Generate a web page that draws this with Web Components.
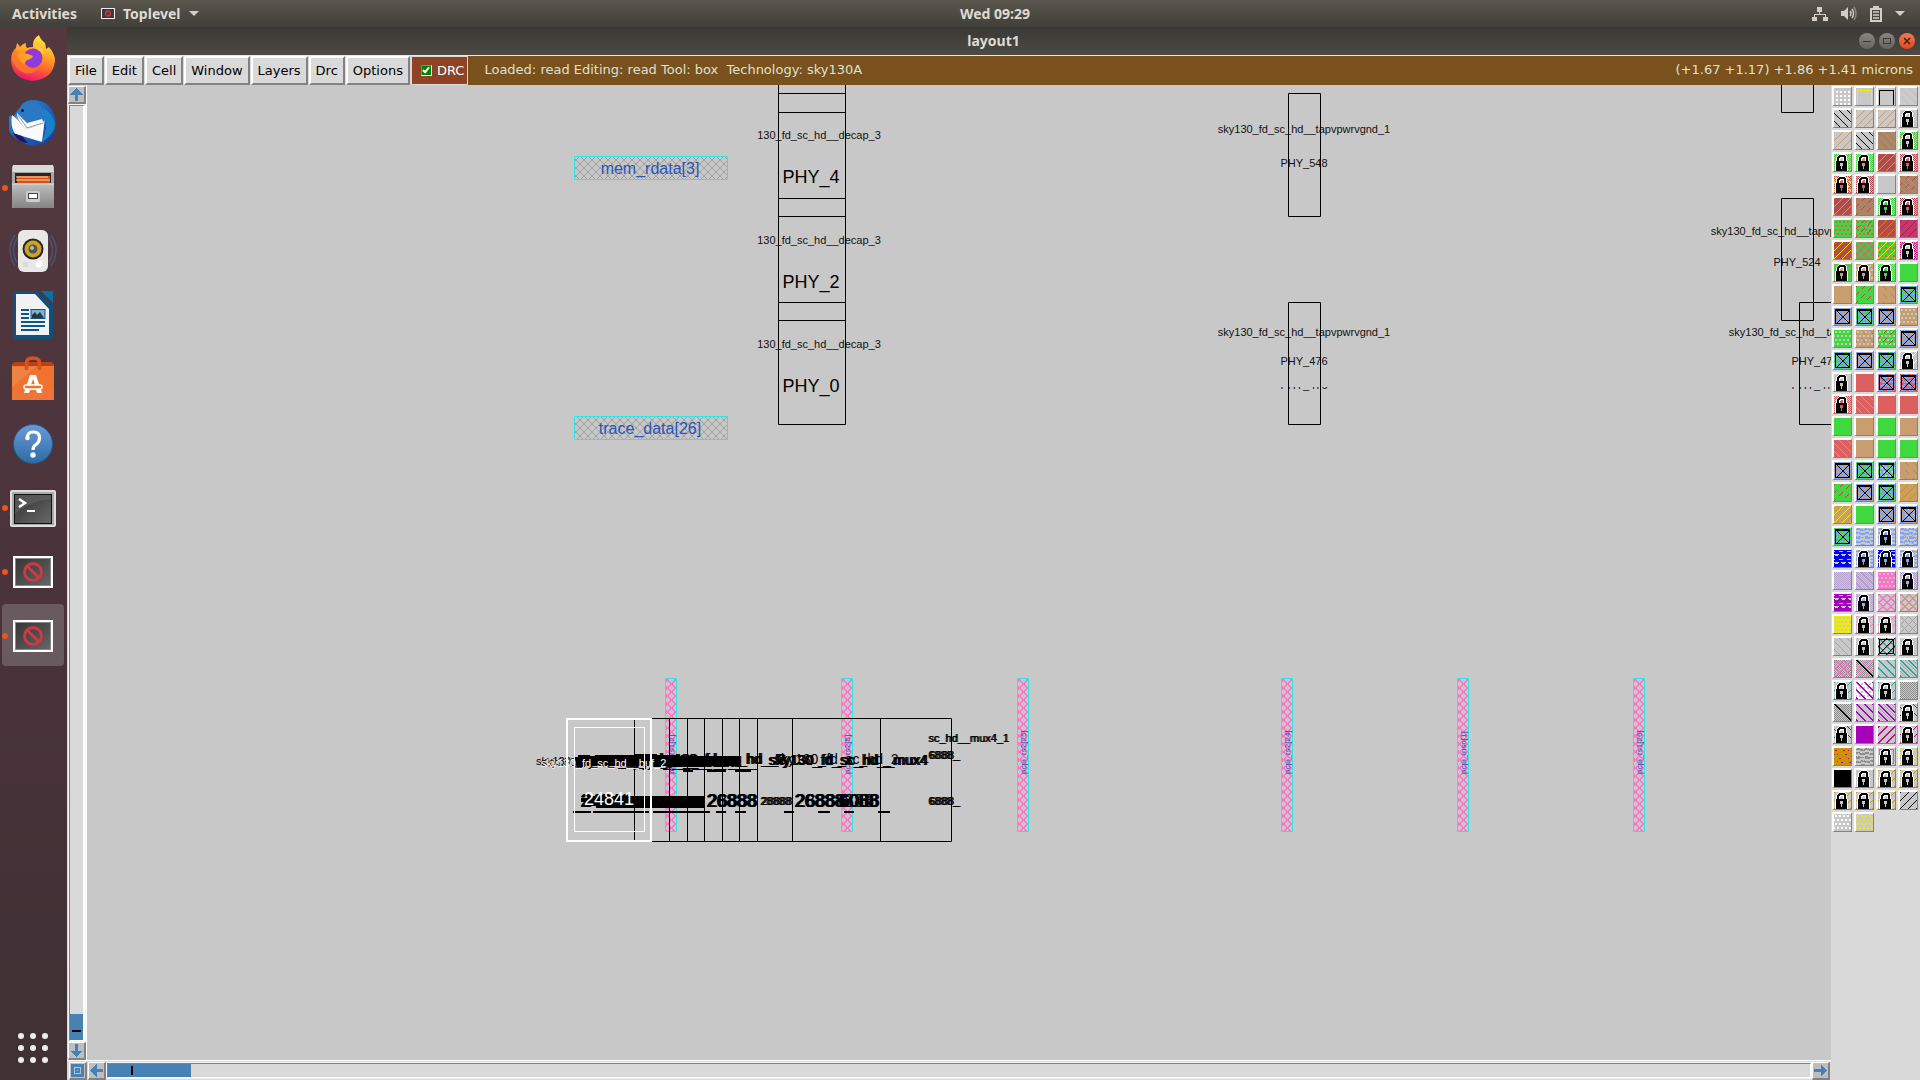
<!DOCTYPE html>
<html lang="en">
<head>
<meta charset="utf-8">
<title>layout1</title>
<style>
html,body{margin:0;height:100%;overflow:hidden}
body{font-family:"DejaVu Sans",sans-serif;font-size:13px;background:#c8c8c8}
</style>
</head>
<body>
<desktop-shell></desktop-shell>
<script>
const define = (name, html) => customElements.define(name, class extends HTMLElement {
  connectedCallback() {
    if (this.shadowRoot) return;
    const t = document.createElement('template');
    t.innerHTML = typeof html === 'function' ? html(this) : html;
    this.attachShadow({mode: 'open'}).append(t.content.cloneNode(true));
  }
});

/* ---------- top panel ---------- */
define('top-panel', `
<style>
:host{display:grid;grid-template-columns:1fr auto 1fr;align-items:center;height:27px;background:linear-gradient(#5a564d,#413f3a);color:#dfdbd2;font:bold 14px/27px "Noto Sans",sans-serif}
button{all:unset;display:flex;align-items:center;gap:8px}
.left{display:flex;gap:24px;padding-left:12px}
.right{justify-content:flex-end;gap:13px;padding-right:15px}
.mid{padding-left:70px}
svg{display:block}
</style>
<div class="left"><button>Activities</button>
<button><svg width="14" height="11" viewBox="0 0 14 11"><rect x=".5" y=".5" width="13" height="10" fill="#3a3a3a" stroke="#eee"/><circle cx="7" cy="5.500" r="2.500" fill="none" stroke="#d3333b" stroke-width="1.300"/><path d="M5.500 4l3 3" stroke="#d3333b"/></svg>Toplevel<svg width="10" height="5"><path d="M0 0h10l-5 5z" fill="#d3cfc6"/></svg></button></div>
<button class="mid">Wed 09:29</button>
<button class="right" aria-label="System menu">
<svg width="16" height="16" viewBox="0 0 16 16" fill="#d3cfc6"><path d="M5 1h5v5H8v2h6v3h2v4h-5v-4h2V9H3v2h2v4H0v-4h2V8h5V6H5z"/></svg>
<svg width="16" height="16" viewBox="0 0 16 16" fill="none"><path d="M0 5h3l4-4v13l-4-4H0z" fill="#d3cfc6"/><path d="M9 5q2 2.500 0 5M11 3q3 4.500 0 9" stroke="#d3cfc6" stroke-width="1.500"/><path d="M13 1q4 6.500 0 13" stroke="#8b887f" stroke-width="1.500"/></svg>
<svg width="12" height="16" viewBox="0 0 12 16"><path d="M3 0h6v2h3v14H0V2h3z" fill="#d3cfc6"/><path d="M2 4h8v10H2z" fill="#4a4842"/><path d="M3 6h6M3 9h6M3 12h6" stroke="#d3cfc6" stroke-width="1.500"/></svg>
<svg width="10" height="5"><path d="M0 0h10l-5 5z" fill="#d3cfc6"/></svg>
</button>`);

/* ---------- dock ---------- */
const icons = {
firefox: '<defs><linearGradient id="f" x1=".7" y1="0" x2=".4" y2="1"><stop offset="0" stop-color="#ffe94a"/><stop offset=".35" stop-color="#ffb028"/><stop offset=".65" stop-color="#ff6a2c"/><stop offset="1" stop-color="#ee1470"/></linearGradient><radialGradient id="p"><stop offset="0" stop-color="#7a45ee"/><stop offset="1" stop-color="#9a35d0"/></radialGradient></defs><path d="M30 0q1 4 6 8q1 3 1 6l3-2q6 7 6 14q-2 18-22 20Q3 44 2 25q0-8 5-12l1-5q2 2 3 4q2-3 6-4q-1 3 1 5q3-1 6-1q-1-8 6-12z" fill="url(#f)"/><path d="M6 14q4 4 3 8q6-3 15 1l-8 5q4 8 14 5q-10 10-20 2Q4 29 3 24z" fill="#ff7d25" opacity=".75"/><circle cx="24" cy="23" r="9.500" fill="url(#p)"/><path d="M8 20q7-4 16 1q-1 3-6 4q-2 2-3 4q-5-4-7-9z" fill="#ffa326"/><path d="M27 10q7 2 8 10q-3-4-6-5z" fill="#ffcf3b"/>',
thunderbird: '<defs><linearGradient id="b" x1="0" y1="0" x2="1" y2="1"><stop offset="0" stop-color="#2a8ee0"/><stop offset="1" stop-color="#123c98"/></linearGradient></defs><path d="M4 18Q12 4 25 1q16 1 21 17q3 13-5 24l-3-1-3 5-5-1-4 2q-14-1-24-12Q-3 28 1 16z" fill="url(#b)"/><path d="M3 16l16 13 17-10-3 24-27-8q-5-8-3-19z" fill="#fafafa"/><path d="M7 18l10 12q9-4 18-6" fill="none" stroke="#999" stroke-width="1.200"/><path d="M9 14Q12 2 22 1q13 4 15 19-2 4-19 10-4-8-9-16z" fill="#2b78c4"/><path d="M8 14q-1 5 9 17 8-4 18-6l-2-5-15 4z" fill="#fafafa"/><path d="M9 16l9 13 16-5" fill="none" stroke="#999"/><path d="M4 34l9 3 6 7q-10 0-15-10z" fill="#20195e"/><circle cx="13.500" cy="11.500" r="1.500" fill="#0a2040"/><path d="M34 8q12 9 12 18 0 8-14 18 5-10 5-19z" fill="#1b80c5"/>',
files: '<g transform="translate(0 -3)"><rect x="3" y="6" width="42" height="42" rx="1" fill="#a8a8a8"/><path d="M4 5h40l1 7H3z" fill="#dadada"/><rect x="6" y="13" width="36" height="10" fill="#2a2320"/><rect x="8" y="16" width="33" height="7" fill="#d4511d"/><path d="M7 17h32M7 20h34" stroke="#ffdf9e"/><path d="M3 24h42v21q0 3-2 3H5q-2 0-2-3z" fill="url(#s)"/><path d="M3 24h42" stroke="#ddd"/><rect x="17" y="31" width="14" height="11" rx="1.500" fill="#ccc"/><rect x="19.500" y="33.500" width="9" height="5" fill="#fff" stroke="#444"/></g>',
music: '<g fill="none" stroke="#4a5c80" stroke-width="1.500" opacity=".75"><path d="M6 8q-10 15 0 31M42 8q10 15 0 31M8 11q-7 12 0 25M40 11q7 12 0 25"/></g><rect x="9" y="3" width="30" height="42" rx="6" fill="#e8e8e6"/><circle cx="24" cy="22" r="10.500" fill="#27251f"/><circle cx="24" cy="22" r="8.500" fill="#cba522"/><circle cx="24" cy="22" r="4.500" fill="#555"/><circle cx="23" cy="21" r="2" fill="#bbb"/><circle cx="30" cy="37" r="3.500" fill="#fff"/><path d="M14 35h5v5h-5z" fill="#dadada"/>',
writer: '<path d="M5 0h23l16 15v29q0 4-4 4H8q-4 0-4-4V1z" fill="#0d527f"/><path d="M7 3h19l14 15v26H7z" fill="#f2f2f2"/><path d="M32 0h12v12z" fill="#0671a8"/><path d="M12 19h8M12 23h8M12 27h8M12 31h24M12 35h24M12 39h18" stroke="#0b568a" stroke-width="2"/><rect x="22" y="18.500" width="14" height="9" fill="#76b5da" stroke="#0b568a"/><path d="M23 27v-3l3-3 2 3 3-3 4 6z" fill="#333"/>',
software: '<g transform="translate(0 2)"><path d="M3 8l2-2h38l2 2v35H3z" fill="#ee7537"/><path d="M3 9h42l-2-4H5z" fill="#b94118"/><path d="M3 10h42v23H3z" fill="#ef722f"/><path d="M3 10h24L3 30z" fill="#eb9050" opacity=".6"/><path d="M17.500 13V6q0-5 6.500-5t6.500 5v7" fill="none" stroke="#d9531e" stroke-width="3.500"/><path d="M15 36h5l1-3h6l1 3h5l-6-18h-6z" fill="#fff"/><path d="M24 22l-2 6h4z" fill="#ef722f"/><rect x="15" y="28" width="18" height="4" rx="2" fill="#ef722f" stroke="#fff" stroke-width="1.500"/></g>',
help: '<defs><linearGradient id="h" x2="0" y2="1"><stop stop-color="#6b9bd8"/><stop offset="1" stop-color="#2c6ba4"/></linearGradient></defs><circle cx="24" cy="25" r="19.500" fill="url(#h)" stroke="#255b88"/><path d="M18.500 20q-1-7 6-7 6 0 6 6 0 4-3.500 6.500-3 2-3 5.500" fill="none" stroke="#fff" stroke-width="3.200"/><circle cx="18.500" cy="19" r="2.300" fill="#fff"/><circle cx="24" cy="36" r="2.700" fill="#fff"/>',
terminal: '<g transform="translate(0 1)"><rect x="1" y="6" width="46" height="37" rx="2" fill="#ddd"/><rect x="3" y="8" width="42" height="33" fill="#aaa"/><rect x="5" y="10" width="38" height="30" fill="#111"/><rect x="6" y="11" width="36" height="28" fill="url(#g)"/><path d="M6 11h36v4Q18 18 6 30z" fill="#666" opacity=".6"/><path d="M10 15l6 4-6 4" fill="none" stroke="#fff" stroke-width="2.500"/><path d="M18 27h8" stroke="#fff" stroke-width="2"/></g>',
tool: '<rect x="5" y="10" width="38" height="30" fill="url(#g)" stroke="#fff" stroke-width="2"/><rect x="6.500" y="11.500" width="35" height="27" fill="none" stroke="#888"/><circle cx="24" cy="25" r="8.500" fill="none" stroke="#cf3a40" stroke-width="2.800"/><path d="M18 19l12 12" stroke="#cf3a40" stroke-width="2.800"/>'};
define('dock-icon', el => `
<style>
:host{display:block;height:64px}
button{all:unset;display:flex;position:relative;box-sizing:border-box;width:62px;height:62px;margin:0 2px;align-items:center;justify-content:center;border-radius:4px}
:host([active]) button{background:#685a5f}
:host([running]) button::before{content:"";position:absolute;left:0;top:29px;width:6px;height:6px;border-radius:3px;background:#e95420}
</style>
<button aria-label="${el.getAttribute('name')}"><svg width="48" height="48" viewBox="0 0 48 48"><defs><linearGradient id="g" x2="1" y2="1"><stop stop-color="#333"/><stop offset="1" stop-color="#686868"/></linearGradient><linearGradient id="s" x2="0" y2="1"><stop stop-color="#bdbdbd"/><stop offset="1" stop-color="#858585"/></linearGradient></defs>${icons[el.getAttribute('name')]}</svg></button>`);
define('app-dock', `
<style>
:host{display:flex;flex-direction:column;background:linear-gradient(#53393e,#4b333c 50%,#3f3134);padding-top:1px;box-sizing:border-box}
.apps{all:unset;display:grid;grid-template-columns:repeat(3,6px);gap:6px;margin:auto 0 17px 18px}
.apps i{width:6px;height:6px;border-radius:3px;background:#f0eeec}
</style>
<dock-icon name="firefox"></dock-icon><dock-icon name="thunderbird"></dock-icon><dock-icon name="files" running></dock-icon><dock-icon name="music"></dock-icon><dock-icon name="writer"></dock-icon><dock-icon name="software"></dock-icon><dock-icon name="help"></dock-icon><dock-icon name="terminal" running></dock-icon><dock-icon name="tool" running></dock-icon><dock-icon name="tool" running active></dock-icon>
<button class="apps" aria-label="Show Applications">${'<i></i>'.repeat(9)}</button>`);

/* ---------- title bar ---------- */
define('title-bar', `
<style>
:host{display:grid;grid-template-columns:1fr auto 1fr;align-items:center;height:28px;background:linear-gradient(#393834,#4c4a43);color:#dfdbd2;font:bold 14px/28px "Noto Sans",sans-serif}
div{display:flex;gap:4px;justify-content:flex-end;padding-right:5px}
button{all:unset;width:16px;height:16px;border-radius:8px;background:linear-gradient(#88867f,#65635c)}
.x{background:linear-gradient(#f4795a,#df4a18)}
svg{display:block}
</style>
<span></span><span>layout1</span>
<div><button aria-label="Minimize"><svg width="16" height="16"><path d="M4 8.500h8" stroke="#3a3935"/></svg></button>
<button aria-label="Maximize"><svg width="16" height="16"><rect x="4.500" y="5.500" width="7" height="5" fill="none" stroke="#3a3935"/></svg></button>
<button class="x" aria-label="Close"><svg width="16" height="16"><path d="M5 5l6 6M11 5l-6 6" stroke="#42210f" stroke-width="1.500"/></svg></button></div>`);

/* ---------- menu bar ---------- */
define('menu-bar', `
<style>
:host{display:flex;align-items:stretch;height:30px;box-sizing:border-box;background:#7a501c;border-top:1px solid #e8e8e8;font-size:13px;line-height:24px}
nav{display:flex;gap:1px;background:#d9d9d9;padding:0 1px}
button{font:inherit;color:#000;background:#d9d9d9;margin:0;padding:0 5px;border:2px solid;border-color:#fff #828282 #828282 #fff;border-radius:0}
label{display:flex;align-items:center;gap:5px;padding:0 3px 0 9px;background:#8e4424;color:#fff;border:1px solid #d9d9d9}
input{appearance:none;margin:0;width:11px;height:11px;background:#008000;border:1px solid;border-color:#60a060 #fff #fff #60a060;box-sizing:border-box;position:relative}
input::after{content:"";position:absolute;left:2px;top:0;width:2px;height:5px;border:solid #fff;border-width:0 2px 2px 0;transform:rotate(40deg)}
.status{flex:1;display:flex;justify-content:space-between;color:#d8e4d4;padding:0 7px 0 16px;line-height:28px;white-space:pre}
</style>
<nav><button>File</button><button>Edit</button><button>Cell</button><button>Window</button><button>Layers</button><button>Drc</button><button>Options</button></nav>
<label><input type="checkbox" checked>DRC</label>
<div class="status"><span>Loaded: read Editing: read Tool: box  Technology: sky130A</span><span>(+1.67 +1.17) +1.86 +1.41 microns</span></div>`);

/* ---------- scroll bars ---------- */
const arrows = {up:'M8 1l7 7h-5v7H6V8H1z', down:'M8 15l7-7h-5V1H6v7H1z', left:'M1 8l7-7v5h7v4H8v5z', right:'M15 8L8 1v5H1v4h7v5z', box:'M1 1h14v14H1z'};
define('arrow-button', el => `
<style>
:host{display:block;width:18px;height:18px}
button{all:unset;display:block;width:15px;height:15px;background:#bebebe;border:solid;border-width:1px 2px 2px 1px;border-color:#fff #828282 #828282 #fff}
svg{display:block}
</style>
<button aria-label="${el.getAttribute('dir')}"><svg width="15" height="15" viewBox="0 0 16 16" fill="#4682b4" shape-rendering="crispEdges"><path d="${arrows[el.getAttribute('dir')]}"/>${el.getAttribute('dir')==='box'?'<path d="M4 4h8v8H4z" fill="#bebebe"/><path d="M5 5h6v6H5z"/><path d="M7 7h2v2H7z" fill="#bebebe"/>':''}</svg></button>`);
define('v-scroll', `
<style>
:host{display:flex;flex-direction:column;align-items:center;padding:1px 0 0 1px;background:#d9d9d9;border-right:1px solid #fff;box-sizing:border-box}
.t{flex:1;width:13px;margin:1px 0;display:flex;flex-direction:column;justify-content:flex-end;border:solid;border-width:1px 2px 1px 1px;border-color:#828282 #fff #fff #828282;outline:1px solid #f4f4f4}
.h{height:26px;background:#4682b4;display:flex;align-items:flex-end;justify-content:center}
.h i{width:9px;height:2px;background:#000;margin-bottom:8px}
</style>
<arrow-button dir="up"></arrow-button><div class="t" role="scrollbar" aria-label="Vertical"><div class="h"><i></i></div></div><arrow-button dir="down"></arrow-button>`);
define('h-scroll', `
<style>
:host{display:flex;align-items:center;gap:1px;padding:0 1px 0 2px;background:#d9d9d9;box-sizing:border-box;border-top:1px solid #fff}
.t{flex:1;height:13px;display:flex;border:1px solid;border-color:#828282 #fff #fff #828282;outline:1px solid #f4f4f4}
.h{width:83px;background:#4682b4;display:flex;align-items:center}
.h i{width:2px;height:9px;background:#000;margin-left:23px}
</style>
<arrow-button dir="box"></arrow-button><arrow-button dir="left"></arrow-button><div class="t" role="scrollbar" aria-label="Horizontal"><div class="h"><i></i></div></div><arrow-button dir="right"></arrow-button>`);

/* ---------- layer palette ---------- */
const C = {n:'#c8c8c8',w:'#ffffff',y:'#f0ec00',k:'#000000',t:'#c89e70',b:'#aa8565',g:'#3fd83f',r:'#b84850',R:'#dc6060',m:'#c8008c',M:'#bd4058',o:'#d08418',u:'#7da4ff',U:'#0000f0',p:'#b8a4d0',P:'#ff70c8',v:'#a400c0',e:'#20a8a0',a:'#a4a4a4',G:'#8e8e8e',l:'#c89400'};
const mod = (a, b) => ((a % b) + b) % b;
const plot = (c, test) => {
  let d = '';
  for (let y = 0; y < 17; y++) for (let x = 0; x < 17; x++) if (test(x, y)) d += `M${x} ${y}h1v1h-1z`;
  return `<path d="${d}" fill="${c}"/>`;
};
const S = {
  '\\': c => plot(c, (x,y) => mod(x-y+3,8)===0),
  '/': c => plot(c, (x,y) => mod(x+y,8)===0),
  '|': c => plot(c, (x,y) => mod(x-y+3,8)===0 && mod(y,8)<4),
  ';': c => plot(c, (x,y) => mod(x+y,8)===0 && mod(y+x*2,7)<4),
  '>': c => plot(c, (x,y) => mod(x-y,8)<2),
  '<': c => plot(c, (x,y) => mod(x+y,8)<2),
  '#': c => plot(c, (x,y) => mod(x-y,8)<2 || mod(x+y,8)<2),
  'x': c => plot(c, (x,y) => mod(x-y,8)===0 || mod(x+y,8)===0),
  ':': c => plot(c, (x,y) => mod(y-1,4)<2 && mod(x-1+(mod(y-1,8)>3?2:0),4)<2),
  '.': c => plot(c, (x,y) => mod(y-3,4)<2 && mod(x-2,4)<2 && y>2),
  '%': c => plot(c, (x,y) => mod(x+y,2)===0),
  '=': c => plot(c, (x,y) => mod(y-1+(mod(x+(y>8?4:0),9)<4?1:0),4)<2 && mod(x*3+y,11)>0),
  'V': c => plot(c, (x,y) => (mod(y,8)===4 && mod(x,7)<5) || (mod(y,8)===5 && mod(x-1,7)<3) || (mod(y,8)===1 && mod(x+3,8)<4)),
  'O': c => `<path d="M1.500 17V2.500h14V17" stroke="${c}" fill="none"/>`,
  'D': c => plot(c, (x,y) => x===y || x===y+1),
  'B': c => `<rect x="1.500" y="1.500" width="14" height="14" fill="none" stroke="${c}"/>`,
  'X': c => plot(c, (x,y) => x>0 && y>1 && x<16 && y<16 ? (x===1||x===15||y===2||y===15||x===y||x+y===17) : (y===1&&x>0&&x<16)),
  'L': c => `<path d="M2 7V3l3-3h5l3 3v4h1v10H1V7z" fill="#fff"/><path d="M3 7V3l2-2h5l2 2v4h-2V4L9 3H6L5 4v3z" fill="#000"/><path d="M5 7V4l1-1h3l1 1v3z" fill="#fff"/><path d="M6 7V5l1-1h1l1 1v2z" fill="${c}"/><path d="M2 7h11v10H2z" fill="#000"/><path d="M6 9h3v3H8v3H7v-3H6z" fill="${c}"/>`
};
/* each cell: base colour, then pairs of stipple and colour */
const table = [
 ['n.w','nOy','nOk','n\\y'],['n\\k','n/t','n/t','n\\yLn'],['n/t','n\\k','b\\g','n%g:tLn'],['n%g:tLn','n%gLt','r/t','n%rLR'],
 ['n%r:yLR','n%rLR','n','b;r\\g'],['r/t','b;r','n%gLg','n%rLR'],['g:R','g:R;r','r/o','M/m'],['r/y','bxg','g:R/y','n%m:bLn'],
 ['g;RLt','t:nLt','n%gLg','g'],['t','g;r','t|b','u=gXk'],['u=tXk','u=g-gXk','u=tXk','t:n'],['g:n','t:n|b','g:n;r','u=tXk'],
 ['u=gXk','u=tXk','u=gXk','n/wLn'],['nLn','R','u=RXk','u=R;rXk'],['n%RLR','R\\t','R','R'],['g','t','g','t'],['R\\t','t','g','g'],
 ['u=tXk','g=uXk','u=g:nXk','t|b'],['g;r','u=t|gXk','u=g|gXk','t/l'],['t/y','g','u=tXk','u=t|yXk'],['g=uXk','n=u','n=uLu','n=u\\t'],
 ['UVn','n=uLu','UVnLu','n=uLu'],['n%p','n%p\\t','P:n','n%pLp'],['vVn','n%pLp','n#P','n#P/t'],['y:n','n/PLn','n/PLn','nxa'],
 ['n\\t|a','nLn','n#e/kBk','nLn'],['n%G#P','n%G/PDk','n>e','n>e\\t'],['n/eLn','w:n>v','n/eLn','n%G'],['n%GDk','n>v','n>v\\t','n\\vLn'],
 ['n\\vLn','v:m=v','n<m','n/mLn'],['l:m=l','n=G','nBGLn','n:yLn'],['k','nLn','n/lLn','n/lLn'],['n/lLn','n/lLn','n/lLn','n/k'],['n:w','n:y|y']];
define('layer-swatch', el => {
  const s = el.getAttribute('paint'); let m = '';
  for (let i = 1; i < s.length; i += 2) {
    if (S[s[i]]) m += S[s[i]](C[s[i+1]] || C.g);
  }
  return `<style>:host{display:block}button{all:unset;display:block;width:17px;height:17px;border:solid;border-width:2px 1px 1px 2px;border-color:#fff #828282 #828282 #fff}svg{display:block;overflow:hidden}</style>
<button aria-label="${el.getAttribute('label')}"><svg width="17" height="17" viewBox="0 0 17 17" shape-rendering="crispEdges"><rect width="17" height="17" fill="${C[s[0]]}"/>${m}</svg></button>`;
});
define('layer-palette', () => `
<style>:host{display:grid;grid-template-columns:repeat(4,20px);grid-auto-rows:20px;gap:2px;align-content:start;padding:1px;background:#d9d9d9}</style>
${table.flat().map((p,i) => `<layer-swatch paint="${p}" label="Layer ${i+1}"></layer-swatch>`).join('')}`);

/* ---------- layout canvas ---------- */
const hseg = (y, a) => a.map(([x, w]) => `M${x} ${y}h${w}v2h${-w}z`).join('');
const small = (x, y, s) => `<text class="s" x="${x}" y="${y}">${s}</text>`;
const heavy = (x, y, s, c) => [0,1,2].map(i => `<text class="${c}" x="${x+i}" y="${y}">${s}</text>`).join('');
const hatch = w => { let d=''; for (let i=0;i<8;i++) d += `M${i} ${i}h${w}v1h${-w}zM${7-i} ${i}h${w}v1h${-w}z`; return d; };
const tap = 'sky130_fd_sc_hd__tapvpwrvgnd_1';
const pins = [671,847,1023,1287,1463,1639];
const pinNames = ['pcpi_rs1[2]','pcpi_rs2[5]','pcpi_rs2[25]','pcpi_rs2[24]','pcpi_insn[1]','pcpi_rs1[26]'];
define('layout-canvas', () => `
<style>
:host{display:block;min-width:0;min-height:0;background:#c8c8c8;overflow:hidden}
svg{display:block;width:100%;height:100%}
text{font-family:"Liberation Sans",sans-serif;white-space:pre}
.s{font-size:11px;text-anchor:middle;fill:#111}
.b{font-size:18px;text-anchor:middle}
.c{font-size:16px;text-anchor:middle;fill:#2a55b8}
.p{font-size:8px;fill:#2a4ab0}
.k{font-size:11px}
.f{font-size:14px}
.d{font-size:18px}
.o{fill:none;stroke:#000}
</style>
<svg><defs>
<pattern id="h" width="8" height="8" patternUnits="userSpaceOnUse"><path d="${hatch(1)}" fill="#a0a0a0" shape-rendering="crispEdges"/></pattern>
<pattern id="q" width="8" height="8" patternUnits="userSpaceOnUse" x="3"><path d="${hatch(2)}" fill="#ff74ca" shape-rendering="crispEdges"/></pattern>
<clipPath id="low"><path d="M1200 387h720v8H1200z"/></clipPath></defs>
<g transform="translate(-87 -85)">
<g fill="url(#h)" stroke="#2ee6e6"><path d="M574.500 156.500h153v23h-153zM574.500 416.500h153v23h-153z"/></g>
<text class="c" x="650" y="174">mem_rdata[3]</text><text class="c" x="650" y="434">trace_data[26]</text>
${[139,244,348].map(y => small(819,y,'130_fd_sc_hd__decap_3')).join('')}
<text class="b" x="811" y="183">PHY_4</text><text class="b" x="811" y="288">PHY_2</text><text class="b" x="811" y="392">PHY_0</text>
<path class="o" d="M778.500 80v344.500h67V80M778.500 93.500h67M778.500 112.500h67M778.500 198.500h67M778.500 216.500h67M778.500 302.500h67M778.500 320.500h67"/>
${small(1304,133,tap)}${small(1304,167,'PHY_548')}${small(1304,336,tap)}${small(1304,365,'PHY_476')}
${small(1797,235,tap)}${small(1797,266,'PHY_524')}${small(1815,336,tap)}${small(1815,365,'PHY_477')}
<g clip-path="url(#low)">${small(1304,389,'PHY_476')}${small(1815,389,'PHY_477')}</g>
<path class="o" d="M1288.500 93.500h32v123h-32zM1288.500 302.500h32v122h-32zM1781.500 80h32v32.500h-32zM1781.500 198.500h32v122h-32zM1799.500 302.500h40v122h-40z"/>
<g fill="url(#q)" stroke="#2ee6e6">${pins.map(x => `<path d="M${x-5.5} 678.500h11v153h-11z"/>`).join('')}</g>
${pins.map((x,i) => `<text class="p" transform="translate(${x+3} 774) rotate(-90)">${pinNames[i]}</text>`).join('')}
<path class="o" d="M566 718.500h385.500v123H566M634.500 718v123M669.500 718v123M687.500 718v123M704.500 718v123M722.500 718v123M739.500 718v123M757.500 718v123M792.500 718v123M880.500 718v123"/>
<text class="k" x="536" y="765">sky130_fd_sc_hd__mux2_1</text><text class="k" x="541" y="766">sky130_fd_sc_hd__mux2_1</text>
<text class="f" x="574" y="766">sky130_fd_sc_hd__mux2</text>
${[619,628,633].map(x => `<text class="f" x="${x}" y="767">sky130_fd_sc_hd__</text>`).join('')}
${heavy(652,764,'sky130_fd_sc_hd__2','f')}
${heavy(768,765,'sky130_fd_sc_hd__mux4','f')}
<text class="f" x="774" y="764">sky130_fd_sc_hd_2</text>
<path d="M574 757h4v-2h12v1h5v-1h40v-1h22v1h23v1h60v10h-40v1h-60v-1h-55v1h-8v-2h-3z"/>
<path d="M581 798h7v-2h117v12H596v-2h-10v-4h-5z"/>
${heavy(580,807,'24841','d')}
${heavy(706,807,'26888','d')}<text class="d" x="712" y="807"> 888</text>
${heavy(794,807,'26888','d')}<text class="d" x="800" y="807"> 888</text>
${heavy(838,807,'6088','d')}<text class="d" x="844" y="807">888</text>
${heavy(760,805,'28888','k')}
<path d="${hseg(811,[[573,18],[593,56],[653,57],[716,10],[735,11],[784,10],[818,12],[844,10],[878,12]])}${hseg(770,[[683,10],[707,19],[735,16]])}"/>
<text class="k" x="928" y="742">sc_hd__mux4_1</text><text class="k" x="929" y="742">sc_hd__mux4_1</text>
${heavy(928,759,'6888_','k')}${heavy(928,805,'6888_','k')}
<g fill="none" stroke="#fff"><rect x="567" y="719" width="84" height="122" stroke-width="2"/><rect x="574.500" y="727.500" width="70" height="104"/></g>
<text class="k" x="541" y="767" fill="#fff">sky130_fd_sc_hd__buf_2</text><text x="609" y="805" class="b" fill="#fff">24841</text>
</g></svg>`);

/* ---------- composition ---------- */
define('layout-window', `
<style>
:host{display:grid;grid-template-rows:auto auto 1fr;min-width:0;min-height:0}
main{display:grid;grid-template:minmax(0,1fr) 20px / 20px minmax(0,1fr) 89px;min-height:0}
h-scroll{grid-column:1/3;grid-row:2}
layer-palette{grid-column:3;grid-row:1/3}
</style>
<title-bar></title-bar><menu-bar></menu-bar>
<main><v-scroll></v-scroll><layout-canvas></layout-canvas><layer-palette></layer-palette><h-scroll></h-scroll></main>`);
define('desktop-shell', `
<style>
:host{display:grid;grid-template:auto minmax(0,1fr) / 67px minmax(0,1fr);height:100vh}
top-panel{grid-column:1/3}
</style>
<top-panel></top-panel><app-dock></app-dock><layout-window></layout-window>`);
</script>
</body>
</html>
